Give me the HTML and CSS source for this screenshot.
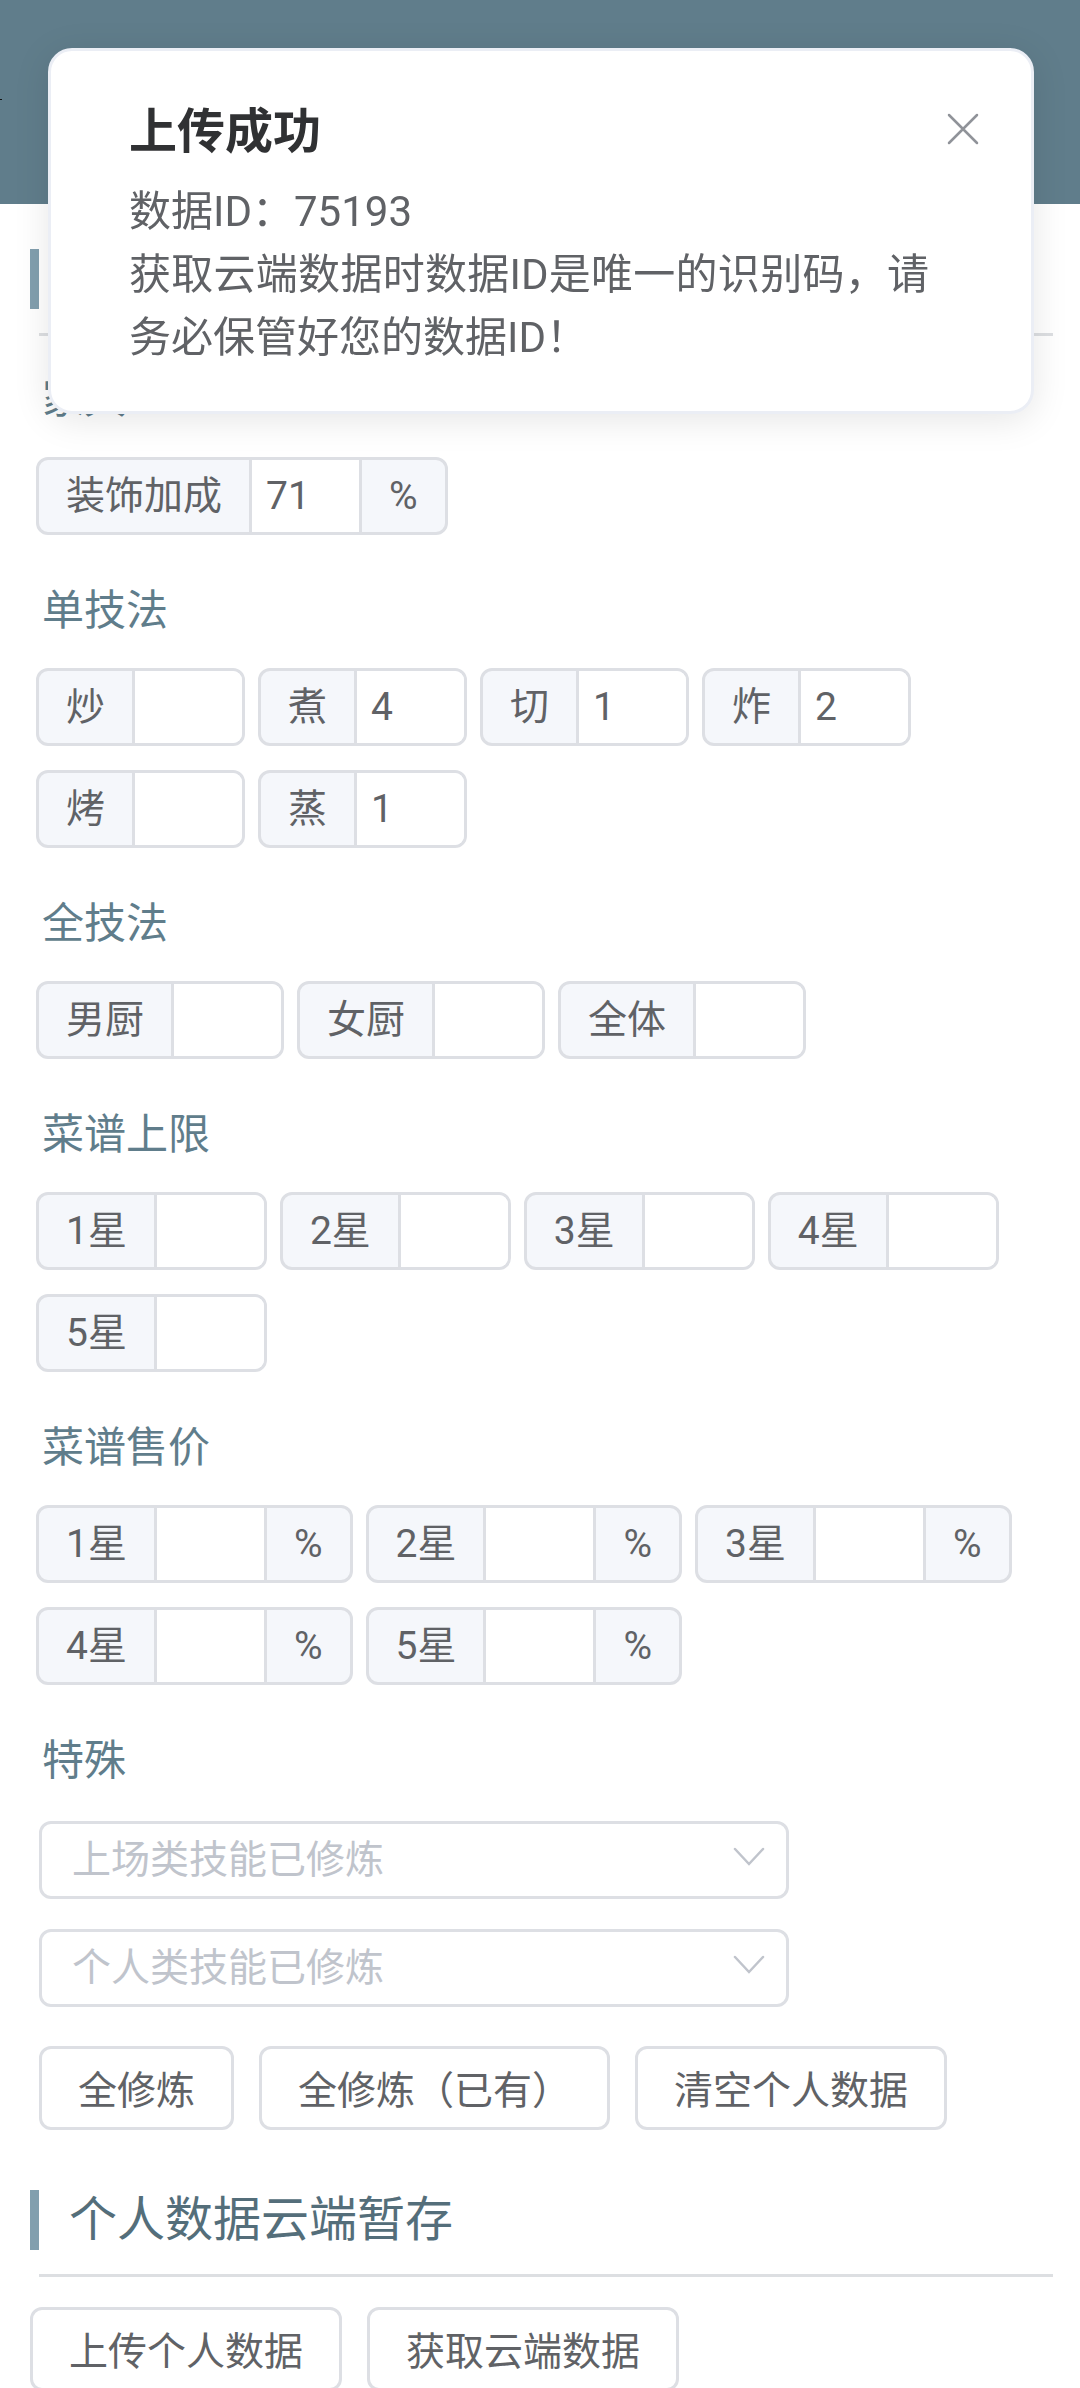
FILE: index.html
```html
<!DOCTYPE html>
<html lang="zh-CN">
<head>
    <meta charset="UTF-8">
    <meta name="viewport" content="width=device-width, initial-scale=1.0">
    <title>个人数据</title>
    <link rel="stylesheet" href="styles.css">
</head>
<body>

<header class="header"></header>

<main class="main">
    <div class="title"></div>

    <h4>家具</h4>
    <div class="row">
        <label class="group"><span>装饰加成</span><input type="text" value="71"><span>%</span></label>
    </div>

    <h4>单技法</h4>
    <div class="row">
        <label class="group"><span>炒</span><input type="text"></label>
        <label class="group"><span>煮</span><input type="text" value="4"></label>
        <label class="group"><span>切</span><input type="text" value="1"></label>
        <label class="group"><span>炸</span><input type="text" value="2"></label>
        <label class="group"><span>烤</span><input type="text"></label>
        <label class="group"><span>蒸</span><input type="text" value="1"></label>
    </div>

    <h4>全技法</h4>
    <div class="row">
        <label class="group"><span>男厨</span><input type="text"></label>
        <label class="group"><span>女厨</span><input type="text"></label>
        <label class="group"><span>全体</span><input type="text"></label>
    </div>

    <h4>菜谱上限</h4>
    <div class="row">
        <label class="group"><span>1星</span><input type="text"></label>
        <label class="group"><span>2星</span><input type="text"></label>
        <label class="group"><span>3星</span><input type="text"></label>
        <label class="group"><span>4星</span><input type="text"></label>
        <label class="group"><span>5星</span><input type="text"></label>
    </div>

    <h4>菜谱售价</h4>
    <div class="row">
        <label class="group"><span>1星</span><input type="text"><span>%</span></label>
        <label class="group"><span>2星</span><input type="text"><span>%</span></label>
        <label class="group"><span>3星</span><input type="text"><span>%</span></label>
        <label class="group"><span>4星</span><input type="text"><span>%</span></label>
        <label class="group"><span>5星</span><input type="text"><span>%</span></label>
    </div>

    <h4>特殊</h4>
    <div class="selects">
        <div class="select">
            <select aria-label="上场类技能已修炼">
                <option>上场类技能已修炼</option>
            </select>
            <svg viewBox="0 0 32 20"><path d="M2 2 L16 17 L30 2"/></svg>
        </div>
        <div class="select">
            <select aria-label="个人类技能已修炼">
                <option>个人类技能已修炼</option>
            </select>
            <svg viewBox="0 0 32 20"><path d="M2 2 L16 17 L30 2"/></svg>
        </div>
    </div>

    <div class="buttons practice">
        <button type="button">全修炼</button>
        <button type="button">全修炼（已有）</button>
        <button type="button">清空个人数据</button>
    </div>

    <h2 class="title">个人数据云端暂存</h2>
    <div class="buttons">
        <button type="button">上传个人数据</button>
        <button type="button">获取云端数据</button>
    </div>
</main>

<div class="notice" role="alert">
    <h3>上传成功</h3>
    <p>数据ID：75193</p>
    <p>获取云端数据时数据ID是唯一的识别码，请务必保管好您的数据ID！</p>
    <button type="button" class="close" aria-label="关闭">
        <svg viewBox="0 0 32 32"><path d="M2 2 L30 30 M30 2 L2 30"/></svg>
    </button>
</div>

</body>
</html>
```
FILE: styles.css
```css
* { margin: 0; padding: 0; box-sizing: border-box; }
body { background: #fff; color: #606266; font-family: Roboto, "Noto Sans CJK SC", sans-serif; font-size: 39px; }
input, select, button { font: inherit; color: inherit; outline: none; }

.header { height: 204px; background: #607d8b; position: relative; }
/* tip of the side menu arrow */
.header::before { content: ""; position: absolute; left: 0; top: 99px; width: 2px; height: 1px; background: #111; }

.main { padding: 45px 27px 12px 30px; }

.title {
    position: relative;
    height: 87px;
    margin-left: 9px;
    padding-left: 30px;
    border-bottom: 3px solid #dddfe2;
    color: #546e7a;
    font-size: 48px;
    font-weight: normal;
    line-height: 60px;
}
.title::before { content: ""; position: absolute; left: -9px; top: 0; width: 9px; height: 60px; background: #829fae; }

h4 { margin: 46px 0 27px 12px; color: #607d8b; font-size: 42px; font-weight: normal; line-height: 60px; }
.title + h4 { margin-top: 33px; margin-bottom: 28px; }

.row { display: flex; flex-wrap: wrap; gap: 24px 13px; margin-left: 6px; }

.group { display: flex; height: 78px; border: 3px solid #dddfe4; border-radius: 12px; background: #f5f7fb; overflow: hidden; }
.group span { padding: 0 27px; line-height: 72px; }
.group input { width: 110px; padding: 0 14px; border: 0 solid #dddfe4; border-left-width: 3px; background: #fff; }
.group input:not(:last-child) { width: 113px; border-right-width: 3px; }

.selects { display: flex; flex-direction: column; gap: 30px; margin: 30px 0 39px 9px; }
.select { position: relative; width: 750px; max-width: 100%; }
.select select {
    display: block;
    width: 100%;
    height: 78px;
    padding: 0 90px 0 30px;
    border: 3px solid #dddfe4;
    border-radius: 12px;
    background: #fff;
    color: #c0c4cc;
    appearance: none;
}
.select svg { position: absolute; right: 24px; top: 26px; width: 32px; height: 20px; fill: none; stroke: #c0c4cc; stroke-width: 2.5; stroke-linecap: round; pointer-events: none; }

.buttons { display: flex; flex-wrap: wrap; gap: 25px; margin-top: 30px; }
.buttons button { height: 84px; padding: 0 36px 3px; border: 3px solid #dddfe4; border-radius: 12px; background: #fff; white-space: nowrap; cursor: pointer; }
.practice { margin: 0 0 60px 9px; }

.notice {
    position: fixed;
    top: 48px;
    left: 48px;
    right: 46px;
    padding: 45px 102px 42px 78px;
    border: 3px solid #ebeef5;
    border-radius: 24px;
    background: #fff;
    box-shadow: 0 6px 36px rgba(0, 0, 0, 0.1);
}
.notice h3 { margin-bottom: 12px; color: #303133; font-size: 48px; line-height: 72px; }
.notice p { font-size: 42px; line-height: 63px; text-align: justify; }
.close { position: absolute; top: 62px; right: 52px; width: 32px; height: 32px; border: none; background: none; cursor: pointer; }
.close svg { display: block; fill: none; stroke: #909399; stroke-width: 2.5; stroke-linecap: round; }
```
